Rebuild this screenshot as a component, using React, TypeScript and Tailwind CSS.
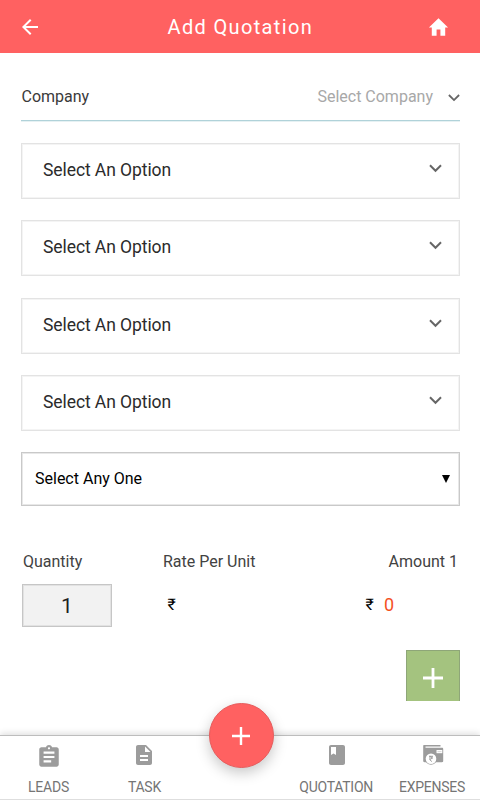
import type { ReactNode } from "react";

function Chevron({ className }: { className: string }) {
  return (
    <svg viewBox="0 0 12 8" className={className} fill="none" stroke="#666666" strokeWidth="1.8">
      <path d="M0.9 1 L6 6.1 L11.1 1" />
    </svg>
  );
}

function OptionField() {
  return (
    <div className="flex h-[56px] w-full shrink-0 items-center justify-between border border-[#e3e3e3] pl-[21px] pr-[17px] shadow-[inset_0_0_0_1px_#f4f4f4]">
      <span className="mb-[2px] text-[17.5px] leading-6 tracking-[-0.08px] text-[#2b2b2b]">Select An Option</span>
      <Chevron className="mb-[5px] h-[9px] w-[13px]" />
    </div>
  );
}

function NavItem({ label, iconClass, children }: { label: string; iconClass: string; children: ReactNode }) {
  return (
    <div className="flex w-24 flex-col items-center">
      <div className="mt-[7px] flex h-[26px] justify-center">
        <svg viewBox="0 0 24 24" className={iconClass} fill="#9c9c9c">
          {children}
        </svg>
      </div>
      <span className="mt-[9px] whitespace-nowrap text-[14px] leading-[18px] tracking-[-0.25px] text-[#757575]">{label}</span>
    </div>
  );
}

export default function App() {
  return (
    <div className="relative flex h-[800px] w-[480px] flex-col overflow-hidden bg-white font-['Roboto','Noto_Sans',sans-serif]">
      <header className="flex h-[53px] shrink-0 items-center bg-[#ff6161] pl-[18px] pr-[30px]">
        <svg viewBox="0 0 24 24" className="h-6 w-6" fill="#fff">
          <path d="M20 11H7.83l5.59-5.59L12 4l-8 8 8 8 1.41-1.41L7.83 13H20v-2z" />
        </svg>
        <h1 className="ml-[125.5px] text-[20px] leading-6 tracking-[1.35px] text-white">Add Quotation</h1>
        <svg viewBox="0 0 24 24" preserveAspectRatio="none" className="ml-auto mt-[2px] h-[25px] w-[23px]" fill="#fff">
          <path d="M10 20v-6h4v6h5v-8h3L12 3 2 12h3v8z" />
        </svg>
      </header>

      <main className="flex flex-1 flex-col pl-[21px] pr-[20px]">
        <div className="flex h-[68px] shrink-0 items-center justify-between border-b border-[#b0d2d9] pt-[20px] shadow-[0_1px_0_#e6f1f3]">
          <span className="pl-[0.5px] text-[16px] leading-5 text-[#3a3a3a]">Company</span>
          <div className="flex items-center">
            <span className="text-[16px] leading-5 text-[#a8a8a8]">Select Company</span>
            <Chevron className="ml-[15px] mt-[3px] h-[8px] w-[12px]" />
          </div>
        </div>

        <div className="mt-[22px] flex shrink-0 flex-col gap-[21.4px]">
          <OptionField />
          <OptionField />
          <OptionField />
          <OptionField />
          <div className="mt-[-0.8px] flex h-[54px] items-center justify-between border border-[#c9c9c9] pl-[13px] pr-[9px] shadow-[inset_0_0_0_1px_#e8e8e8]">
            <span className="mt-px text-[16px] leading-5 text-black">Select Any One</span>
            <svg viewBox="0 0 8 8" className="h-2 w-2" fill="#000">
              <path d="M0 0h8L4 8z" />
            </svg>
          </div>
        </div>

        <div className="mt-[45.8px] flex h-5 shrink-0 text-[16px] leading-5 text-[#424242]">
          <span className="w-[142px] pl-[2px]">Quantity</span>
          <span>Rate Per Unit</span>
          <span className="ml-auto pr-[2px]">Amount 1</span>
        </div>

        <div className="mt-[12px] flex h-[44px] shrink-0 items-center pl-[1px]">
          <div className="flex h-[43px] w-[90px] items-center justify-center border border-[#c6c6c6] bg-[#f2f2f2] pt-[2px] text-[21px] text-[#1f1f1f] shadow-[inset_0_0_0_1px_#e2e2e2]">1</div>
          <span className="mb-px ml-[55.5px] text-[16px] leading-5 text-black">₹</span>
          <span className="mb-px ml-auto text-[16px] leading-5 text-black">₹</span>
          <span className="mb-[2px] ml-[10px] mr-[66px] text-[18px] leading-5 text-[#f4511e]">0</span>
        </div>

        <button className="mt-[22px] flex h-[51px] w-[54px] shrink-0 items-center justify-center self-end border border-b-0 border-[#8ea678] bg-[#a4c37f] pt-[4px]">
          <svg viewBox="0 0 20 20" className="h-5 w-5" stroke="#fff" strokeWidth="2.8">
            <path d="M10 0v20M0 10h20" />
          </svg>
        </button>
      </main>

      <nav className="flex h-[65px] shrink-0 border-b border-t border-b-[#dedede] border-t-[#bdbdbd] bg-white pl-[0.6px] shadow-[0_-2px_6px_rgba(0,0,0,0.12)]">
        <NavItem label="LEADS" iconClass="ml-px mt-[1px] h-[26px] w-[26px]">
          <path d="M19 3h-4.18C14.4 1.84 13.3 1 12 1c-1.3 0-2.4.84-2.82 2H5c-1.1 0-2 .9-2 2v14c0 1.1.9 2 2 2h14c1.1 0 2-.9 2-2V5c0-1.1-.9-2-2-2zm-7 0c.55 0 1 .45 1 1s-.45 1-1 1-1-.45-1-1 .45-1 1-1zm2 14H7v-2h7v2zm3-4H7v-2h10v2zm0-4H7V7h10v2z" />
        </NavItem>
        <NavItem label="TASK" iconClass="h-6 w-6">
          <path d="M14 2H6c-1.1 0-1.99.9-1.99 2L4 20c0 1.1.89 2 1.99 2H18c1.1 0 2-.9 2-2V8l-6-6zm2 16H8v-2h8v2zm0-4H8v-2h8v2zm-3-5V3.5L18.5 9H13z" />
        </NavItem>
        <div className="w-24" />
        <NavItem label="QUOTATION" iconClass="ml-px h-6 w-6">
          <path d="M18 2H6c-1.1 0-2 .9-2 2v16c0 1.1.9 2 2 2h12c1.1 0 2-.9 2-2V4c0-1.1-.9-2-2-2zM6 4h5v8l-2.5-1.5L6 12V4z" />
        </NavItem>
        <NavItem label="EXPENSES" iconClass="ml-[2px] h-6 w-6">
          <path d="M3 2h16.5v1.4H4.5v1.4H21c.8 0 1.2.4 1.2 1.2v12c0 .8-.5 1.2-1.2 1.2H3.5c-.8 0-1.3-.5-1.3-1.2V3.2c0-.7.3-1.2.8-1.2z" />
          <path d="M15.5 7h5.8v3.2h-5.8z" fill="#fff" />
          <path d="M16.5 8h4v1.1h-4z" opacity="0.35" />
          <circle cx="10" cy="15.8" r="6" fill="#9c9c9c" />
          <circle cx="10" cy="15.8" r="5.3" fill="#fff" />
          <path d="M8 13.3h4M8 15h4M8.6 13.3c2.8 0 2.8 3.2 0 3.2l2.3 2.1" fill="none" stroke="#9c9c9c" strokeWidth="1" />
        </NavItem>
      </nav>

      <button className="absolute left-[208.5px] top-[703px] flex h-[65px] w-[65px] items-center justify-center rounded-full border border-[#e65c5c] bg-[#ff6161] shadow-[0_5px_14px_rgba(0,0,0,0.22)]">
        <svg viewBox="0 0 18 18" className="h-[18px] w-[18px]" stroke="#fff" strokeWidth="2.4">
          <path d="M9 0v18M0 9h18" />
        </svg>
      </button>
    </div>
  );
}
